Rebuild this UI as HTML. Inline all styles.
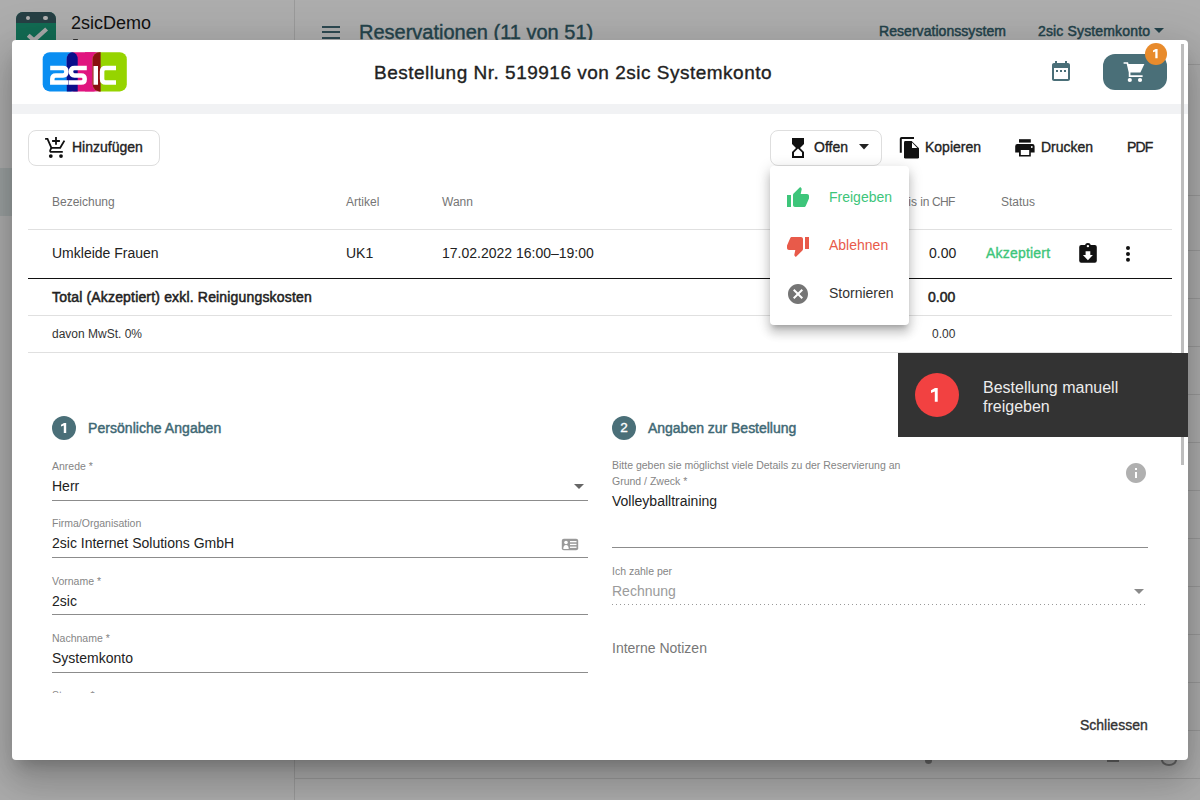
<!DOCTYPE html>
<html><head><meta charset="utf-8">
<style>
*{box-sizing:border-box;margin:0;padding:0}
html,body{width:1200px;height:800px;overflow:hidden;font-family:"Liberation Sans",sans-serif;}
body{background:#adadad;position:relative;}
.t{position:absolute;white-space:nowrap;line-height:1}
.m{-webkit-text-stroke:0.35px currentColor}
.b{position:absolute}
svg{position:absolute;overflow:visible}
#modal{position:absolute;left:12px;top:40px;width:1176px;height:720px;background:#fff;border-radius:4px;box-shadow:0 11px 15px -7px rgba(0,0,0,.2),0 24px 38px 3px rgba(0,0,0,.14),0 9px 46px 8px rgba(0,0,0,.12)}
.lbl{font-size:10.5px;color:#858585}
.val{font-size:14px;color:#222}
.uline{position:absolute;height:1px;background:#8c8c8c}
</style></head><body>
<!-- ===== background app ===== -->
<div class="b" style="left:0;top:168px;width:294px;height:48px;background:#9ba1a1"></div>
<div class="b" style="left:294px;top:0;width:1px;height:800px;background:#9a9a9a"></div>
<div class="b" style="left:295px;top:64px;width:905px;height:1px;background:#9a9a9a"></div>
<div class="b" style="left:295px;top:195px;width:905px;height:1px;background:#9a9a9a"></div>
<div class="b" style="left:295px;top:250px;width:905px;height:1px;background:#9a9a9a"></div>
<div class="b" style="left:295px;top:298px;width:905px;height:1px;background:#9a9a9a"></div>
<div class="b" style="left:295px;top:346px;width:905px;height:1px;background:#9a9a9a"></div>
<div class="b" style="left:295px;top:394px;width:905px;height:1px;background:#9a9a9a"></div>
<div class="b" style="left:295px;top:442px;width:905px;height:1px;background:#9a9a9a"></div>
<div class="b" style="left:295px;top:490px;width:905px;height:1px;background:#9a9a9a"></div>
<div class="b" style="left:295px;top:538px;width:905px;height:1px;background:#9a9a9a"></div>
<div class="b" style="left:295px;top:586px;width:905px;height:1px;background:#9a9a9a"></div>
<div class="b" style="left:295px;top:634px;width:905px;height:1px;background:#9a9a9a"></div>
<div class="b" style="left:295px;top:682px;width:905px;height:1px;background:#9a9a9a"></div>
<div class="b" style="left:295px;top:730px;width:905px;height:1px;background:#9a9a9a"></div>
<div class="b" style="left:295px;top:778px;width:905px;height:1px;background:#9a9a9a"></div>
<div class="b" style="left:925px;top:757px;width:7px;height:7px;border-radius:50%;background:#6a6a6a"></div>
<div class="b" style="left:1107px;top:758px;width:12px;height:4px;background:#6a6a6a"></div>
<div class="b" style="left:1161px;top:754px;width:16px;height:12px;border-radius:50%;border:2px solid #6a6a6a"></div>
<!-- app icon -->
<div class="b" style="left:16px;top:12px;width:40px;height:40px;border-radius:7px 7px 0 0;background:#126b53;overflow:hidden">
  <div class="b" style="left:0;top:0;width:40px;height:11px;background:#263f44"></div>
  <div class="b" style="left:9.5px;top:3.6px;width:4.8px;height:4.8px;border-radius:50%;background:#b0b0b0"></div>
  <div class="b" style="left:27.3px;top:3.6px;width:4.8px;height:4.8px;border-radius:50%;background:#b0b0b0"></div>
  <svg style="left:0;top:0" width="40" height="40"><path d="M12.2 23.2 L18 28.4 L30.6 17" stroke="#a9a9a9" stroke-width="4.2" fill="none"/></svg>
</div>
<div class="t" style="left:71px;top:14px;font-size:18px;color:#111">2sicDemo</div>
<div class="b" style="left:72.5px;top:38.6px;width:5px;height:1.4px;border-radius:1px;background:#333"></div>
<!-- hamburger -->
<div class="b" style="left:322px;top:25.5px;width:18px;height:2px;background:#2e4a52"></div>
<div class="b" style="left:322px;top:31px;width:18px;height:2px;background:#2e4a52"></div>
<div class="b" style="left:322px;top:36.5px;width:18px;height:2px;background:#2e4a52"></div>
<div class="t" style="left:359px;top:22px;font-size:20px;-webkit-text-stroke:0.4px #24434b;color:#24434b">Reservationen (11 von 51)</div>
<div class="t" style="left:879px;top:24px;font-size:14px;letter-spacing:0.05px;-webkit-text-stroke:0.5px #24434b;color:#24434b">Reservationssystem</div>
<div class="t" style="left:1038px;top:24px;font-size:14px;letter-spacing:0.15px;-webkit-text-stroke:0.5px #24434b;color:#24434b">2sic Systemkonto</div>
<svg style="left:1154px;top:28px" width="10" height="6"><path d="M0 0 H10 L5 5 Z" fill="#24434b"/></svg>

<!-- ===== modal ===== -->
<div id="modal"></div>
<!-- logo -->
<svg style="left:42px;top:52px" width="86" height="40" viewBox="42 52 86 40">
  <rect x="42.7" y="52.2" width="35" height="39.2" rx="7" fill="#0a8ef2"/>
  <rect x="66.8" y="52.2" width="33.8" height="39.2" rx="7" fill="#e0157f"/>
  <rect x="85" y="52.2" width="15.6" height="39.2" fill="#e0157f"/>
  <rect x="92.7" y="52.2" width="34.1" height="39.2" rx="7" fill="#96d400"/>
  <path d="M66.8 59.2 A5.45 7 0 0 1 77.7 59.2 V91.4 H66.8 Z" fill="#0a0f8a"/>
  <path d="M100.6 52.2 H99.7 A7 7 0 0 0 92.7 59.2 V84.4 A7 7 0 0 0 99.7 91.4 H100.6 Z" fill="#8a1010"/>
  <g fill="none" stroke="#fff" stroke-width="4.5">
    <path d="M50.2 68.1 H63 Q66.4 68.1 66.4 71.6 V72 Q66.4 75.4 63 75.4 H55.8 Q52.3 75.4 52.3 78.9 V82.6 H68.5"/>
    <path d="M86.8 68.1 H74.5 Q71 68.1 71 71.6 Q71 75.4 74.5 75.4 H81.2 Q84.7 75.4 84.7 78.9 Q84.7 82.6 81.2 82.6 H68.9"/>
    <path d="M95.75 66 V84.75"/>
    <path d="M116 68.1 H105.6 Q102.1 68.1 102.1 71.6 V79.1 Q102.1 82.6 105.6 82.6 H116"/>
  </g>
</svg>
<div class="t m" style="left:374px;top:63px;font-size:19px;letter-spacing:0.5px;color:#222">Bestellung Nr. 519916 von 2sic Systemkonto</div>
<!-- calendar icon -->
<svg style="left:1052px;top:61px" width="18" height="20" viewBox="3 2 18 20"><path fill="#4a6f78" d="M9 11H7v2h2v-2zm4 0h-2v2h2v-2zm4 0h-2v2h2v-2zm2-7h-1V2h-2v2H8V2H6v2H5c-1.11 0-1.99.9-1.99 2L3 20c0 1.1.89 2 2 2h14c1.1 0 2-.9 2-2V6c0-1.1-.9-2-2-2zm0 16H5V9h14v11z"/></svg>
<!-- cart button -->
<div class="b" style="left:1103px;top:54px;width:64px;height:36px;border-radius:12px;background:#4a6f78"></div>
<svg style="left:1118px;top:56px" width="32" height="32" viewBox="0 0 32 32">
  <path d="M5.6 7 H9.4 L11.6 16.4 V20.2 H24.6" fill="none" stroke="#fff" stroke-width="1.7"/>
  <path d="M9.4 8 H26.4 L22.4 16.4 H11.4 Z" fill="#fff"/>
  <circle cx="11.8" cy="24" r="2.1" fill="#fff"/><circle cx="22" cy="24" r="2.1" fill="#fff"/>
</svg>
<div class="b" style="left:1145px;top:43px;width:22px;height:22px;border-radius:50%;background:#e88b2c"></div>
<svg style="left:1152.1px;top:47.9px" width="7" height="11"><path d="M5.60 1.00 L5.60 10.30 L3.30 10.30 L3.30 3.42 L1.00 4.35 L1.00 2.58 L3.50 1.00 Z" fill="#fff"/></svg>
<!-- gray strip -->
<div class="b" style="left:12px;top:104px;width:1176px;height:10px;background:#f1f2f4"></div>

<!-- toolbar -->
<div class="b" style="left:28px;top:130px;width:132px;height:36px;border:1px solid #dedede;border-radius:8px"></div>
<svg style="left:42px;top:134px" width="26" height="26" viewBox="0 0 26 26">
  <g fill="none" stroke="#111" stroke-width="1.8">
  <path d="M3.1 4.9 H5.5 L9.4 13.8 H18.2 L22.4 6.6"/>
  <path d="M9.4 13.8 L8.3 16 Q7.6 17.9 9.5 17.9 H20.8"/>
  <path d="M14 3.1 V10.7 M10.1 7 H17.9"/>
  </g>
  <circle cx="8.8" cy="22.1" r="1.9" fill="#111"/><circle cx="19" cy="22.1" r="1.9" fill="#111"/>
</svg>
<div class="t m" style="left:72px;top:140px;font-size:14px;color:#222">Hinzufügen</div>

<div class="b" style="left:770px;top:130px;width:112px;height:36px;border:1px solid #dedede;border-radius:8px"></div>
<svg style="left:792px;top:138px" width="12" height="20" viewBox="6 2 12 20"><path fill="#111" d="M6 2l.01 6L10 12l-3.99 4.01L6 22h12v-6l-4-4 4-3.99V2H6zm10 14.5V20H8v-3.5l4-4 4 4z"/></svg>
<div class="t m" style="left:814px;top:140px;font-size:14px;color:#222">Offen</div>
<svg style="left:859px;top:144px" width="10" height="6"><path d="M0 0 H10 L5 5.5 Z" fill="#222"/></svg>

<svg style="left:894px;top:132px" width="32" height="32" viewBox="0 0 32 32">
  <path d="M6.8 20.8 V6.8 Q6.8 6 7.6 6 H20" fill="none" stroke="#111" stroke-width="2"/>
  <path d="M10 10.4 Q10 9 11.4 9 H17.6 L25 16.2 V25.2 Q25 26.6 23.6 26.6 H11.4 Q10 26.6 10 25.2 Z" fill="#111"/>
  <path d="M18 10.6 V15.9 H23.3 Z" fill="#fff"/>
</svg>
<div class="t m" style="left:925px;top:140px;font-size:14px;color:#222">Kopieren</div>
<svg style="left:1010px;top:132px" width="32" height="32" viewBox="0 0 32 32">
  <rect x="9" y="7.2" width="11.8" height="3.4" fill="#111"/>
  <path d="M5.2 14.2 Q5.2 12 7.4 12 H22.4 Q24.6 12 24.6 14.2 V20.6 H20.8 V24.6 H9 V20.6 H5.2 Z" fill="#111"/>
  <rect x="10.8" y="18" width="8.4" height="5" fill="#fff"/>
  <circle cx="21.8" cy="15" r="0.9" fill="#fff"/>
</svg>
<div class="t m" style="left:1041px;top:140px;font-size:14px;color:#222">Drucken</div>
<div class="t m" style="left:1127px;top:140px;font-size:14px;letter-spacing:-0.8px;color:#222">PDF</div>

<!-- table -->
<div class="t" style="left:52px;top:196px;font-size:12px;color:#757575">Bezeichung</div>
<div class="t" style="left:346px;top:196px;font-size:12px;color:#757575">Artikel</div>
<div class="t" style="left:442px;top:196px;font-size:12px;color:#757575">Wann</div>
<div class="t" style="left:886px;top:196px;font-size:12px;color:#757575">Pre</div>
<div class="t" style="left:908.2px;top:196px;font-size:12px;color:#757575">i</div>
<div class="t" style="left:911px;top:196px;font-size:12px;color:#757575">s</div>
<div class="t" style="left:920.2px;top:196px;font-size:12px;color:#757575">in</div>
<div class="t" style="left:932px;top:196px;font-size:12px;letter-spacing:-0.7px;color:#757575">CHF</div>
<div class="t" style="left:1001px;top:196px;font-size:12px;color:#757575">Status</div>
<div class="b" style="left:28px;top:229px;width:1144px;height:1px;background:#e0e0e0"></div>
<div class="t" style="left:52px;top:246px;font-size:14px;color:#222">Umkleide Frauen</div>
<div class="t" style="left:346px;top:246px;font-size:14px;color:#222">UK1</div>
<div class="t" style="left:442px;top:246px;font-size:14px;color:#222">17.02.2022 16:00–19:00</div>
<div class="t" style="left:929px;top:246px;font-size:14px;color:#222">0.00</div>
<div class="t m" style="left:986px;top:246px;font-size:14px;letter-spacing:0.2px;color:#3dc57a">Akzeptiert</div>
<svg style="left:1079px;top:242px" width="19" height="22" viewBox="0 0 19 22">
  <rect x="0.2" y="3" width="17.6" height="17.7" rx="2" fill="#111"/>
  <circle cx="8.9" cy="3.9" r="2.9" fill="#111"/><circle cx="8.9" cy="4.1" r="1.2" fill="#fff"/>
  <path d="M6.6 9.2 H11.3 V13 H13.9 L8.9 18.2 L3.9 13 H6.6 Z" fill="#fff"/>
</svg>
<svg style="left:1124px;top:244px" width="8" height="20" viewBox="0 0 8 20">
  <circle cx="4" cy="4" r="2" fill="#111"/><circle cx="4" cy="9.9" r="2" fill="#111"/><circle cx="4" cy="15.8" r="2" fill="#111"/>
</svg>
<div class="b" style="left:28px;top:277.5px;width:1144px;height:1.5px;background:#111"></div>
<div class="t" style="left:52px;top:290px;font-size:14px;letter-spacing:0.17px;-webkit-text-stroke:0.5px #222;color:#222">Total (Akzeptiert) exkl. Reinigungskosten</div>
<div class="t" style="left:928px;top:290px;font-size:14px;-webkit-text-stroke:0.5px #222;color:#222">0.00</div>
<div class="b" style="left:28px;top:315px;width:1144px;height:1px;background:#e0e0e0"></div>
<div class="t" style="left:52px;top:328px;font-size:12px;color:#333">davon MwSt. 0%</div>
<div class="t" style="left:932px;top:328px;font-size:12px;color:#333">0.00</div>
<div class="b" style="left:28px;top:352px;width:1144px;height:1px;background:#e0e0e0"></div>

<!-- dropdown menu -->
<div class="b" style="left:770px;top:166px;width:139px;height:159px;background:#fff;border-radius:4px;box-shadow:0 5px 5px -3px rgba(0,0,0,.2),0 8px 10px 1px rgba(0,0,0,.14),0 3px 14px 2px rgba(0,0,0,.12)"></div>
<svg style="left:786px;top:187px" width="24" height="22" viewBox="0 1 24 22"><path fill="#3dc57a" d="M1 21h4V9H1v12zm22-11c0-1.1-.9-2-2-2h-6.31l.95-4.57.03-.32c0-.41-.17-.79-.44-1.06L14.17 1 7.59 7.59C7.22 7.95 7 8.45 7 9v10c0 1.1.9 2 2 2h9c.83 0 1.54-.5 1.84-1.22l3.02-7.05c.09-.23.14-.47.14-.73v-1.91l-.01-.01L23 10z"/></svg>
<div class="t" style="left:829px;top:190px;font-size:14px;color:#3dc57a">Freigeben</div>
<svg style="left:786px;top:235px" width="24" height="22" viewBox="0 1 24 22"><path fill="#e85a4a" d="M15 3H6c-.83 0-1.54.5-1.84 1.22l-3.02 7.05c-.09.23-.14.47-.14.73v1.91l.01.01L1 14c0 1.1.9 2 2 2h6.31l-.95 4.57-.03.32c0 .41.17.79.44 1.06L9.83 23l6.59-6.59c.36-.36.58-.86.58-1.41V5c0-1.1-.9-2-2-2zm4 0v12h4V3h-4z"/></svg>
<div class="t" style="left:829px;top:238px;font-size:14px;color:#e85a4a">Ablehnen</div>
<svg style="left:786px;top:282px" width="24" height="24" viewBox="0 0 24 24"><path fill="#757575" d="M12 2C6.47 2 2 6.47 2 12s4.470 10 10 10 10-4.47 10-10S17.53 2 12 2zm5 13.59L15.59 17 12 13.41 8.41 17 7 15.59 10.59 12 7 8.41 8.41 7 12 10.59 15.59 7 17 8.41 13.41 12 17 15.59z"/></svg>
<div class="t" style="left:829px;top:286px;font-size:14px;color:#333">Stornieren</div>

<!-- scrollbar -->
<div class="b" style="left:1181px;top:44px;width:3px;height:421px;background:#bdbdbd"></div>
<!-- tooltip -->
<div class="b" style="left:898px;top:353px;width:290px;height:84px;background:#333"></div>
<div class="b" style="left:915px;top:373px;width:44px;height:44px;border-radius:50%;background:#f24141"></div>
<svg style="left:930.4px;top:387.3px" width="9" height="16"><path d="M7.70 1.00 L7.70 14.80 L4.80 14.80 L4.80 4.59 L1.00 5.97 L1.00 3.35 L5.00 1.00 Z" fill="#fff"/></svg>
<div class="t" style="left:983px;top:380px;font-size:16px;color:#ececec">Bestellung manuell</div>
<div class="t" style="left:983px;top:399px;font-size:16px;color:#ececec">freigeben</div>

<!-- section 1 -->
<div class="b" style="left:52px;top:416px;width:24px;height:24px;border-radius:50%;background:#4a6f78"></div>
<svg style="left:59.7px;top:422px" width="7" height="12"><path d="M6.20 1.00 L6.20 11.00 L3.80 11.00 L3.80 3.60 L1.00 4.60 L1.00 2.70 L4.00 1.00 Z" fill="#fff"/></svg>
<div class="t" style="left:88px;top:421px;font-size:14px;letter-spacing:0.05px;-webkit-text-stroke:0.45px #3e6874;color:#3e6874">Persönliche Angaben</div>

<div class="t lbl" style="left:52px;top:461px">Anrede *</div>
<div class="t val" style="left:52px;top:479px">Herr</div>
<svg style="left:574px;top:484px" width="10" height="5"><path d="M0 0 H10 L5 5 Z" fill="#666"/></svg>
<div class="uline" style="left:52px;top:500px;width:536px"></div>

<div class="t lbl" style="left:52px;top:518px">Firma/Organisation</div>
<div class="t val" style="left:52px;top:536px">2sic Internet Solutions GmbH</div>
<svg style="left:561px;top:538px" width="18" height="13" viewBox="0 0 18 13">
  <rect x="0.8" y="0.8" width="16.4" height="11.4" rx="2" fill="#9a9a9a"/>
  <circle cx="5" cy="4.5" r="1.8" fill="#fff"/><path d="M2.3 11 Q2.3 7 5 7 Q7.7 7 7.7 11 Z" fill="#fff"/>
  <rect x="9" y="3" width="6.5" height="1.3" fill="#fff"/><rect x="9" y="5.8" width="6.5" height="1.3" fill="#fff"/><rect x="9" y="8.6" width="6.5" height="1.3" fill="#fff"/>
</svg>
<div class="uline" style="left:52px;top:557px;width:536px"></div>

<div class="t lbl" style="left:52px;top:576px">Vorname *</div>
<div class="t val" style="left:52px;top:594px">2sic</div>
<div class="uline" style="left:52px;top:614px;width:536px"></div>

<div class="t lbl" style="left:52px;top:633px">Nachname *</div>
<div class="t val" style="left:52px;top:651px">Systemkonto</div>
<div class="uline" style="left:52px;top:672px;width:536px"></div>
<div class="b" style="left:52px;top:689px;width:300px;height:4px;overflow:hidden">
  <div class="t lbl" style="left:0;top:1px">Strasse *</div>
</div>

<!-- section 2 -->
<div class="b" style="left:612px;top:416px;width:24px;height:24px;border-radius:50%;background:#4a6f78"></div>
<div class="t m" style="left:612px;top:421px;width:24px;text-align:center;font-size:13.5px;color:#fff">2</div>
<div class="t" style="left:648px;top:421px;font-size:14px;letter-spacing:-0.02px;-webkit-text-stroke:0.45px #3e6874;color:#3e6874">Angaben zur Bestellung</div>

<div class="t lbl" style="left:612px;top:460px">Bitte geben sie möglichst viele Details zu der Reservierung an</div>
<div class="t lbl" style="left:612px;top:476px">Grund / Zweck *</div>
<div class="t val" style="left:612px;top:494px">Volleyballtraining</div>
<svg style="left:1126px;top:463px" width="20" height="20" viewBox="2 2 20 20"><path fill="#b0b0b0" d="M12 2C6.48 2 2 6.48 2 12s4.48 10 10 10 10-4.48 10-10S17.52 2 12 2zm1 15h-2v-6h2v6zm0-8h-2V7h2v2z"/></svg>
<div class="uline" style="left:612px;top:547px;width:536px"></div>

<div class="t lbl" style="left:612px;top:566px">Ich zahle per</div>
<div class="t val" style="left:612px;top:584px;color:#9b9b9b">Rechnung</div>
<svg style="left:1134px;top:589px" width="10" height="5"><path d="M0 0 H10 L5 5 Z" fill="#8a8a8a"/></svg>
<div class="b" style="left:612px;top:604px;width:536px;height:1px;background-image:linear-gradient(to right,#999 0,#999 1px,transparent 1px);background-size:4px 1px"></div>

<div class="t val" style="left:612px;top:641px;color:#777">Interne Notizen</div>

<div class="t m" style="left:1080px;top:718px;font-size:14px;color:#333">Schliessen</div>

</body></html>
